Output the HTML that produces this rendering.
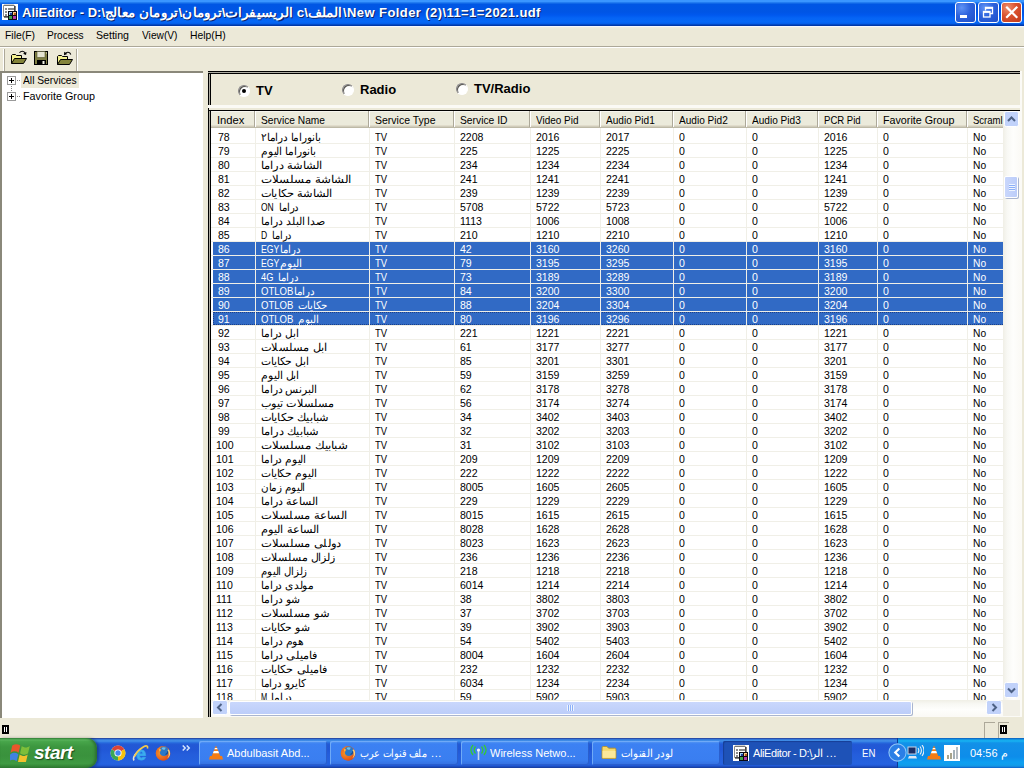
<!DOCTYPE html>
<html lang="en"><head><meta charset="utf-8"><title>AliEditor</title>
<style>
*{box-sizing:border-box;margin:0;padding:0}
html,body{width:1024px;height:768px;overflow:hidden;background:#ece9d8}
body{position:relative;font-family:"Liberation Sans",sans-serif;font-size:11px;color:#000;line-height:14px}
.abs{position:absolute}
/* title bar */
#tb{position:absolute;left:0;top:0;width:1024px;height:26px;
background:linear-gradient(to bottom,#3a96ff 0,#3a96ff 1.5px,#1670ea 3px,#0056e4 4.5px,#0055e5 12px,#0058ee 15px,#0564f5 18px,#0668f6 22px,#045ce6 24px,#0038a8 25px,#0038a8 26px)}
#tb .t{position:absolute;left:22px;top:4px;height:18px;line-height:18px;font-size:13px;font-weight:bold;color:#fff;white-space:nowrap;text-shadow:1px 1px 0 #0a246a}
.wb{position:absolute;top:2px;width:21px;height:21px;border:1px solid #fff;border-radius:3px;
background:radial-gradient(circle at 30% 25%,#5f93f5 0%,#2d62dc 45%,#1f4fc8 100%)}
.wb.x{background:radial-gradient(circle at 30% 25%,#ee9070 0%,#d9512e 45%,#c03a1c 100%)}
/* menu */
#mb{position:absolute;left:0;top:26px;width:1024px;height:20px;background:linear-gradient(to bottom,#f4f7fd 0,#f4f7fd 1px,#f0eee2 1px,#ece9d8 3px)}
#mb span{position:absolute;top:2px;line-height:14px;white-space:nowrap;transform-origin:0 50%}
#l1{position:absolute;left:0;top:46px;width:1024px;height:1px;background:#aca899}
#l2{position:absolute;left:0;top:47px;width:1024px;height:1px;background:#fff}
/* toolbar */
#tl{position:absolute;left:0;top:48px;width:1024px;height:24px;background:#ece9d8}
/* tree */
#tree{position:absolute;left:0;top:71px;width:203px;height:647px;background:#fff;border-left:2px solid #8a887a;border-top:2px solid #8a887a}
#tree .n{position:absolute;white-space:nowrap;line-height:14px;transform-origin:0 50%}
.pm{position:absolute;width:9px;height:9px;border:1px solid #9a9a9a;background:#fff}
.pm:before{content:"";position:absolute;left:1px;top:3px;width:5px;height:1px;background:#000}
.pm:after{content:"";position:absolute;left:3px;top:1px;width:1px;height:5px;background:#000}
/* right pane */
#rp{position:absolute;left:208px;top:71px;width:814px;height:37px;background:#ece9d8;border-right:2px solid #fbfaf6;border-bottom:3px solid #fbfaf5}
#rp:before,#lvb:before{content:"";position:absolute;left:0;top:0;bottom:0;width:3px;background:linear-gradient(to right,#000 0 1px,#aeaca2 1px 2px,#000 2px 3px)}
#rp:after{content:"";position:absolute;left:0;top:0;right:0;height:3px;background:linear-gradient(to bottom,#000 0 1px,#aeaca2 1px 2px,#000 2px 3px)}
.rd{position:absolute;width:12px;height:12px;border-radius:50%;background:#fff;border:1px solid;border-color:#848284 #fff #fff #848284;box-shadow:inset 1px 1px 0 #55544e}
.rd.on:after{content:"";position:absolute;left:3px;top:3px;width:4px;height:4px;border-radius:50%;background:#000}
.rl{position:absolute;font-size:13px;font-weight:bold;line-height:16px;white-space:nowrap}
/* listview */
#lvb{position:absolute;left:208px;top:108px;width:814px;height:609px;background:#fff;border-right:2px solid #fbfaf6;border-bottom:2px solid #fbfaf6}
#lvb:after{content:"";position:absolute;left:1px;top:0;right:0;height:3px;background:linear-gradient(to bottom,#ece9d8 0 2px,#000 2px 3px)}
#lv{position:absolute;left:211px;top:111px;width:792px;height:589px;background:#fff;overflow:hidden}
#hdr{position:absolute;left:0;top:0;width:792px;height:17px;background:#ebeadb;border-bottom:1px solid #bdb9a6;box-shadow:inset 0 -1px 0 #d0ccbb, inset 0 -2px 0 #e0dccb, inset 0 1px 0 #f6f5ee}
.hc{position:absolute;top:0;height:17px}
.hc span{position:absolute;left:6px;top:2px;line-height:14px;white-space:nowrap;transform-origin:0 50%}
.hc:after{content:"";position:absolute;right:0;top:0;width:1px;height:16px;background:#aca899;box-shadow:1px 0 0 #fff}
.vg{position:absolute;top:17px;width:1px;height:572px;background:#f0efe7;z-index:3}
.r{position:absolute;left:0;width:792px;height:14px;border-bottom:1px solid #f0efe7}
.r .c{position:absolute;top:0;line-height:14px;white-space:nowrap;transform-origin:0 50%;transform:scaleX(.96)}
.r.sel{color:#fff}
.r.sel:before{content:"";position:absolute;left:2px;top:0;width:790px;height:13px;background:#316ac5}
.r.sel .c{z-index:1}
/* scrollbars */
.sbt{position:absolute;background:#f6f5f0}
.sbt.v{background:linear-gradient(to right,#f0efe6 0,#f8f8f4 25%,#fefefc 60%,#fbfaf6 100%)}
.sbt.h{background:linear-gradient(to bottom,#f0efe6 0,#f8f8f4 25%,#fefefc 60%,#fbfaf6 100%)}
.sbb{position:absolute;width:17px;height:17px}
.thumb{position:absolute;background:linear-gradient(to bottom,#c9d7fc,#bccdf9);border:1px solid #fff;border-radius:2px;box-shadow:1px 1px 0 #a9b5cf}
.thumb.vt{background:linear-gradient(to right,#c9d7fc,#bccdf9)}
/* status */
#st{position:absolute;left:0;top:718px;width:1024px;height:20px;background:#ece9d8}
/* taskbar */
#tk{position:absolute;left:0;top:738px;width:1024px;height:30px;
background:linear-gradient(to bottom,#1f2f86 0,#3165c4 3%,#3682e5 6%,#4490e6 10%,#3883e5 12%,#2b71e0 15%,#2663da 18%,#235bd6 20%,#2258d5 23%,#2157d6 38%,#245ddb 54%,#2562df 86%,#245fdc 89%,#2158d4 92%,#1d4ec0 95%,#1941a5 98%)}
.tbtn{position:absolute;top:3px;height:24px;border-radius:2px;background:linear-gradient(to bottom,#5a9cf2 0,#3c81f3 12%,#3a7ef0 80%,#346fdf 100%);box-shadow:inset 1px 1px 0 #6faaf7,inset -1px -1px 0 #2a5fce;color:#fff;white-space:nowrap}
.tbtn.act{background:#1e52b7;box-shadow:inset 1px 1px 1px #173f96}
.tbtn span{position:absolute;top:5px;line-height:14px}
#tray{position:absolute;left:897px;top:0;width:127px;height:30px;border-left:1px solid #0f3a96;
background:linear-gradient(to bottom,#0c59b9 0,#139ee9 6%,#18b5f2 10%,#139beb 14%,#1290e8 19%,#0d8dea 63%,#0d9ff1 81%,#0f9eed 88%,#119be9 91%,#1392e2 94%,#137ed7 97%,#095bc9 100%)}
#start{position:absolute;left:0;top:0;width:97px;height:30px;border-radius:0 10px 10px 0;
background:linear-gradient(to bottom,#388e3c 0,#5cb860 6%,#47a54a 12%,#3c963f 30%,#3a923d 60%,#3f9a42 85%,#2f7d32 100%);box-shadow:inset -2px 0 3px #2c6e2f, 2px 0 3px rgba(0,0,0,.3)}
#start span{position:absolute;left:34px;top:4px;font-size:19px;font-weight:bold;font-style:italic;color:#fff;line-height:22px;text-shadow:1px 1px 1px #1c4a1e;letter-spacing:-0.5px}

.r.foc:after{content:"";box-sizing:border-box;position:absolute;left:2px;top:0;width:790px;height:13px;border:1px dotted #1c3f88;border-right:0;z-index:2}
.r .s{transform-origin:0 50%}

#lvb:before{bottom:-2px}

</style></head>
<body>
<div id="tb">
<svg class="abs" style="left:2px;top:4px" width="16" height="16" viewBox="0 0 16 16"><rect width="16" height="16" fill="#fff"/><path d="M1.500 1.500h11v11h-11z" fill="#fff" stroke="#8c8c8c"/><path d="M2 1.200h10" stroke="#6e6e6e" stroke-width="1"/><path d="M13 2v5M2 13h5" stroke="#000" stroke-width="1"/><rect x="3" y="4" width="2" height="2" fill="#8a8a8a"/><rect x="3" y="7" width="2" height="2" fill="#8a8a8a"/><rect x="3" y="10" width="2" height="2" fill="#8a8a8a"/><rect x="6" y="4" width="6" height="2" fill="#8a8a8a"/><rect x="6" y="7" width="9" height="9" fill="#0a0a12"/><rect x="7" y="8" width="3" height="3" fill="#1f3f9a"/><path d="M7 11v-3h3v1h-2v2z" fill="#9fd0f5"/><rect x="11" y="8" width="3" height="3" fill="#b85a14"/><path d="M11 11v-3h3v1h-2v2z" fill="#fbc98a"/><rect x="7" y="12" width="3" height="3" fill="#3fa64a"/><rect x="11" y="12" width="3" height="3" fill="#b437a8"/></svg>
<div class="t" style="left:22px">AliEditor - D:\</div><div class="t" style="left:105px;transform-origin:0 0;transform:scaleX(1.04)">الريسيفرات\ترومان\ترومان معالج c\الملف</div><div class="t" style="left:343px;letter-spacing:.42px">\New Folder (2)\11=1=2021.udf</div>
<div class="wb" style="left:955px"><i class="abs" style="left:4px;top:12px;width:7px;height:3px;background:#fff"></i></div>
<div class="wb" style="left:978px"><svg class="abs" style="left:0;top:0" width="19" height="19"><path d="M6.500 7.500V4.500h7v6h-2.500" fill="none" stroke="#fff" stroke-width="1.300"/><path d="M6.500 5h7" stroke="#fff" stroke-width="1.800"/><rect x="4.500" y="8.500" width="6.500" height="5.500" fill="none" stroke="#fff" stroke-width="1.300"/><path d="M4.500 9h6.500" stroke="#fff" stroke-width="1.800"/></svg></div>
<div class="wb x" style="left:1001px"><svg class="abs" style="left:0;top:0" width="19" height="19"><path d="M5 4.500l9.500 9.500M14.500 4.500l-9.500 9.500" stroke="#fff" stroke-width="2.200" stroke-linecap="square"/></svg></div>
</div>
<div id="mb"><span style="left:5px;transform:scaleX(.945)">File(F)</span><span style="left:47px;transform:scaleX(.92)">Process</span><span style="left:96px;transform:scaleX(.963)">Setting</span><span style="left:142px;transform:scaleX(.927)">View(V)</span><span style="left:190px;transform:scaleX(.942)">Help(H)</span></div>
<i id="l1"></i><i id="l2"></i>
<div id="tl">
<i class="abs" style="left:3px;top:1px;width:1px;height:22px;background:#fff"></i><i class="abs" style="left:4px;top:1px;width:1px;height:22px;background:#aca899"></i>
<i class="abs" style="left:76px;top:1px;width:1px;height:22px;background:#aca899"></i><i class="abs" style="left:77px;top:1px;width:1px;height:22px;background:#fff"></i>
<svg class="abs" style="left:11px;top:2px" width="16" height="16" viewBox="0 0 16 16"><path d="M0.500 13.500V5.500L1.500 4.500H4.500L5.500 5.500H10.500V8.500" fill="#f3f08f" stroke="#000"/><path d="M0.500 13.500L3.500 8.500H15.500L12.500 13.500Z" fill="#83833a" stroke="#000"/><path d="M8.500 2.800C10 0.600 13 0.600 14.300 3.200" fill="none" stroke="#000" stroke-width="1.100"/><path d="M15 5L12 3.800L15.500 2Z" fill="#000"/></svg>
<svg class="abs" style="left:34px;top:3px" width="15" height="14" viewBox="0 0 15 14"><rect x="0.500" y="0.500" width="13" height="13" fill="#7f7f43" stroke="#000"/><rect x="3" y="0.500" width="8" height="6" fill="#e6e5d2" stroke="#55552c" stroke-width=".6"/><rect x="3" y="9" width="9" height="4.500" fill="#000"/><rect x="8.500" y="10" width="2" height="3" fill="#f4f3e6"/><rect x="12" y="1.500" width="1" height="1" fill="#e6e5d2"/></svg>
<svg class="abs" style="left:57px;top:3px" width="16" height="16" viewBox="0 0 16 16"><path d="M0.500 13.500V5.500L1.500 4.500H4.500L5.500 5.500H10.500V8.500" fill="#f3f08f" stroke="#000"/><path d="M0.500 13.500L3.500 8.500H15.500L12.500 13.500Z" fill="#83833a" stroke="#000"/><path d="M13.800 3.500C12.800 0.600 9.500 0.600 8.300 2.600" fill="none" stroke="#000" stroke-width="1.100"/><path d="M7 4.300L7.200 0.800L10.300 3Z" fill="#000"/></svg>
</div>
<div id="tree">
<i class="abs" style="left:19px;top:0;width:58px;height:15px;background:#ece9d8"></i>
<i class="pm" style="left:5px;top:3px"></i><span class="n" style="left:21px;top:0;transform:scaleX(.934)">All Services</span>
<i class="pm" style="left:5px;top:19px"></i><span class="n" style="left:21px;top:16px;transform:scaleX(.98)">Favorite Group</span>
<i class="abs" style="left:9px;top:13px;width:1px;height:6px;background:repeating-linear-gradient(to bottom,#848284 0 1px,#fff 1px 2px)"></i>
<i class="abs" style="left:15px;top:7px;width:4px;height:1px;background:repeating-linear-gradient(to right,#848284 0 1px,#fff 1px 2px)"></i>
<i class="abs" style="left:15px;top:23px;width:4px;height:1px;background:repeating-linear-gradient(to right,#848284 0 1px,#fff 1px 2px)"></i>
</div>
<div id="rp">
<i class="rd on" style="left:30px;top:14px"></i><span class="rl" style="left:48px;top:12px">TV</span>
<i class="rd" style="left:134px;top:13px"></i><span class="rl" style="left:152px;top:11px">Radio</span>
<i class="rd" style="left:248px;top:12px"></i><span class="rl" style="left:266px;top:10px">TV/Radio</span>
</div>
<div id="lvb"></div>
<div id="lv">
<div id="hdr">
<div class="hc" style="left:0px;width:44px"><span style="transform:scaleX(1.02)">Index</span></div>
<div class="hc" style="left:44px;width:114px"><span style="transform:scaleX(0.926)">Service Name</span></div>
<div class="hc" style="left:158px;width:85px"><span style="transform:scaleX(0.954)">Service Type</span></div>
<div class="hc" style="left:243px;width:76px"><span style="transform:scaleX(0.936)">Service ID</span></div>
<div class="hc" style="left:319px;width:70px"><span style="transform:scaleX(0.906)">Video Pid</span></div>
<div class="hc" style="left:389px;width:73px"><span style="transform:scaleX(0.916)">Audio Pid1</span></div>
<div class="hc" style="left:462px;width:73px"><span style="transform:scaleX(0.916)">Audio Pid2</span></div>
<div class="hc" style="left:535px;width:72px"><span style="transform:scaleX(0.916)">Audio Pid3</span></div>
<div class="hc" style="left:607px;width:59px"><span style="transform:scaleX(0.87)">PCR Pid</span></div>
<div class="hc" style="left:666px;width:90px"><span style="transform:scaleX(0.974)">Favorite Group</span></div>
<div class="hc" style="left:756px;width:37px"><span style="transform:scaleX(0.865)">Scraml</span></div>
</div>
<i class="vg" style="left:44px"></i>
<i class="vg" style="left:158px"></i>
<i class="vg" style="left:243px"></i>
<i class="vg" style="left:319px"></i>
<i class="vg" style="left:389px"></i>
<i class="vg" style="left:462px"></i>
<i class="vg" style="left:535px"></i>
<i class="vg" style="left:607px"></i>
<i class="vg" style="left:666px"></i>
<i class="vg" style="left:756px"></i>
<div class="r" style="top:19px"><span class="c" style="left:6.5px">78</span><span class="c s" style="left:50px;transform:scaleX(0.951)">بانوراما دراما٢</span><span class="c s" style="left:164px;transform:scaleX(.86)">TV</span><span class="c" style="left:249px">2208</span><span class="c" style="left:325px">2016</span><span class="c" style="left:395px">2017</span><span class="c" style="left:468px">0</span><span class="c" style="left:541px">0</span><span class="c" style="left:613px">2016</span><span class="c" style="left:672px">0</span><span class="c s" style="left:762px;transform:scaleX(.93)">No</span></div>
<div class="r" style="top:33px"><span class="c" style="left:6.5px">79</span><span class="c s" style="left:50px;transform:scaleX(0.964)">بانوراما اليوم</span><span class="c s" style="left:164px;transform:scaleX(.86)">TV</span><span class="c" style="left:249px">225</span><span class="c" style="left:325px">1225</span><span class="c" style="left:395px">2225</span><span class="c" style="left:468px">0</span><span class="c" style="left:541px">0</span><span class="c" style="left:613px">1225</span><span class="c" style="left:672px">0</span><span class="c s" style="left:762px;transform:scaleX(.93)">No</span></div>
<div class="r" style="top:47px"><span class="c" style="left:6.5px">80</span><span class="c s" style="left:50px;transform:scaleX(1.041)">الشاشة دراما</span><span class="c s" style="left:164px;transform:scaleX(.86)">TV</span><span class="c" style="left:249px">234</span><span class="c" style="left:325px">1234</span><span class="c" style="left:395px">2234</span><span class="c" style="left:468px">0</span><span class="c" style="left:541px">0</span><span class="c" style="left:613px">1234</span><span class="c" style="left:672px">0</span><span class="c s" style="left:762px;transform:scaleX(.93)">No</span></div>
<div class="r" style="top:61px"><span class="c" style="left:6.5px">81</span><span class="c s" style="left:50px;transform:scaleX(1.077)">الشاشة مسلسلات</span><span class="c s" style="left:164px;transform:scaleX(.86)">TV</span><span class="c" style="left:249px">241</span><span class="c" style="left:325px">1241</span><span class="c" style="left:395px">2241</span><span class="c" style="left:468px">0</span><span class="c" style="left:541px">0</span><span class="c" style="left:613px">1241</span><span class="c" style="left:672px">0</span><span class="c s" style="left:762px;transform:scaleX(.93)">No</span></div>
<div class="r" style="top:75px"><span class="c" style="left:6.5px">82</span><span class="c s" style="left:50px;transform:scaleX(1.034)">الشاشة حكايات</span><span class="c s" style="left:164px;transform:scaleX(.86)">TV</span><span class="c" style="left:249px">239</span><span class="c" style="left:325px">1239</span><span class="c" style="left:395px">2239</span><span class="c" style="left:468px">0</span><span class="c" style="left:541px">0</span><span class="c" style="left:613px">1239</span><span class="c" style="left:672px">0</span><span class="c s" style="left:762px;transform:scaleX(.93)">No</span></div>
<div class="r" style="top:89px"><span class="c" style="left:6.5px">83</span><span class="c s" style="left:50px;transform:scaleX(0.770)">ON</span><span class="c s" style="left:68.4px;transform:scaleX(0.909)">دراما</span><span class="c s" style="left:164px;transform:scaleX(.86)">TV</span><span class="c" style="left:249px">5708</span><span class="c" style="left:325px">5722</span><span class="c" style="left:395px">5723</span><span class="c" style="left:468px">0</span><span class="c" style="left:541px">0</span><span class="c" style="left:613px">5722</span><span class="c" style="left:672px">0</span><span class="c s" style="left:762px;transform:scaleX(.93)">No</span></div>
<div class="r" style="top:103px"><span class="c" style="left:6.5px">84</span><span class="c s" style="left:50px;transform:scaleX(0.987)">صدا البلد دراما</span><span class="c s" style="left:164px;transform:scaleX(.86)">TV</span><span class="c" style="left:249px">1113</span><span class="c" style="left:325px">1006</span><span class="c" style="left:395px">1008</span><span class="c" style="left:468px">0</span><span class="c" style="left:541px">0</span><span class="c" style="left:613px">1006</span><span class="c" style="left:672px">0</span><span class="c s" style="left:762px;transform:scaleX(.93)">No</span></div>
<div class="r" style="top:117px"><span class="c" style="left:6.5px">85</span><span class="c s" style="left:50px;transform:scaleX(0.780)">D</span><span class="c s" style="left:60.5px;transform:scaleX(0.886)">دراما</span><span class="c s" style="left:164px;transform:scaleX(.86)">TV</span><span class="c" style="left:249px">210</span><span class="c" style="left:325px">1210</span><span class="c" style="left:395px">2210</span><span class="c" style="left:468px">0</span><span class="c" style="left:541px">0</span><span class="c" style="left:613px">1210</span><span class="c" style="left:672px">0</span><span class="c s" style="left:762px;transform:scaleX(.93)">No</span></div>
<div class="r sel" style="top:131px"><span class="c" style="left:6.5px">86</span><span class="c s" style="left:50px;transform:scaleX(0.792)">EGY</span><span class="c s" style="left:69.3px;transform:scaleX(0.914)">دراما</span><span class="c s" style="left:164px;transform:scaleX(.86)">TV</span><span class="c" style="left:249px">42</span><span class="c" style="left:325px">3160</span><span class="c" style="left:395px">3260</span><span class="c" style="left:468px">0</span><span class="c" style="left:541px">0</span><span class="c" style="left:613px">3160</span><span class="c" style="left:672px">0</span><span class="c s" style="left:762px;transform:scaleX(.93)">No</span></div>
<div class="r sel" style="top:145px"><span class="c" style="left:6.5px">87</span><span class="c s" style="left:50px;transform:scaleX(0.792)">EGY</span><span class="c s" style="left:69.0px;transform:scaleX(0.977)">اليوم</span><span class="c s" style="left:164px;transform:scaleX(.86)">TV</span><span class="c" style="left:249px">79</span><span class="c" style="left:325px">3195</span><span class="c" style="left:395px">3295</span><span class="c" style="left:468px">0</span><span class="c" style="left:541px">0</span><span class="c" style="left:613px">3195</span><span class="c" style="left:672px">0</span><span class="c s" style="left:762px;transform:scaleX(.93)">No</span></div>
<div class="r sel" style="top:159px"><span class="c" style="left:6.5px">88</span><span class="c s" style="left:50px;transform:scaleX(0.844)">4G</span><span class="c s" style="left:66.5px;transform:scaleX(0.918)">دراما</span><span class="c s" style="left:164px;transform:scaleX(.86)">TV</span><span class="c" style="left:249px">73</span><span class="c" style="left:325px">3189</span><span class="c" style="left:395px">3289</span><span class="c" style="left:468px">0</span><span class="c" style="left:541px">0</span><span class="c" style="left:613px">3189</span><span class="c" style="left:672px">0</span><span class="c s" style="left:762px;transform:scaleX(.93)">No</span></div>
<div class="r sel" style="top:173px"><span class="c" style="left:6.5px">89</span><span class="c s" style="left:50px;transform:scaleX(0.869)">OTLOB</span><span class="c s" style="left:83.0px;transform:scaleX(0.936)">دراما</span><span class="c s" style="left:164px;transform:scaleX(.86)">TV</span><span class="c" style="left:249px">84</span><span class="c" style="left:325px">3200</span><span class="c" style="left:395px">3300</span><span class="c" style="left:468px">0</span><span class="c" style="left:541px">0</span><span class="c" style="left:613px">3200</span><span class="c" style="left:672px">0</span><span class="c s" style="left:762px;transform:scaleX(.93)">No</span></div>
<div class="r sel" style="top:187px"><span class="c" style="left:6.5px">90</span><span class="c s" style="left:50px;transform:scaleX(0.869)">OTLOB</span><span class="c s" style="left:86.7px;transform:scaleX(0.922)">حكايات</span><span class="c s" style="left:164px;transform:scaleX(.86)">TV</span><span class="c" style="left:249px">88</span><span class="c" style="left:325px">3204</span><span class="c" style="left:395px">3304</span><span class="c" style="left:468px">0</span><span class="c" style="left:541px">0</span><span class="c" style="left:613px">3204</span><span class="c" style="left:672px">0</span><span class="c s" style="left:762px;transform:scaleX(.93)">No</span></div>
<div class="r sel foc" style="top:201px"><span class="c" style="left:6.5px">91</span><span class="c s" style="left:50px;transform:scaleX(0.869)">OTLOB</span><span class="c s" style="left:86.7px;transform:scaleX(0.936)">اليوم</span><span class="c s" style="left:164px;transform:scaleX(.86)">TV</span><span class="c" style="left:249px">80</span><span class="c" style="left:325px">3196</span><span class="c" style="left:395px">3296</span><span class="c" style="left:468px">0</span><span class="c" style="left:541px">0</span><span class="c" style="left:613px">3196</span><span class="c" style="left:672px">0</span><span class="c s" style="left:762px;transform:scaleX(.93)">No</span></div>
<div class="r" style="top:215px"><span class="c" style="left:6.5px">92</span><span class="c s" style="left:50px;transform:scaleX(0.960)">ابل دراما</span><span class="c s" style="left:164px;transform:scaleX(.86)">TV</span><span class="c" style="left:249px">221</span><span class="c" style="left:325px">1221</span><span class="c" style="left:395px">2221</span><span class="c" style="left:468px">0</span><span class="c" style="left:541px">0</span><span class="c" style="left:613px">1221</span><span class="c" style="left:672px">0</span><span class="c s" style="left:762px;transform:scaleX(.93)">No</span></div>
<div class="r" style="top:229px"><span class="c" style="left:6.5px">93</span><span class="c s" style="left:50px;transform:scaleX(1.033)">ابل مسلسلات</span><span class="c s" style="left:164px;transform:scaleX(.86)">TV</span><span class="c" style="left:249px">61</span><span class="c" style="left:325px">3177</span><span class="c" style="left:395px">3277</span><span class="c" style="left:468px">0</span><span class="c" style="left:541px">0</span><span class="c" style="left:613px">3177</span><span class="c" style="left:672px">0</span><span class="c s" style="left:762px;transform:scaleX(.93)">No</span></div>
<div class="r" style="top:243px"><span class="c" style="left:6.5px">94</span><span class="c s" style="left:50px;transform:scaleX(0.974)">ابل حكايات</span><span class="c s" style="left:164px;transform:scaleX(.86)">TV</span><span class="c" style="left:249px">85</span><span class="c" style="left:325px">3201</span><span class="c" style="left:395px">3301</span><span class="c" style="left:468px">0</span><span class="c" style="left:541px">0</span><span class="c" style="left:613px">3201</span><span class="c" style="left:672px">0</span><span class="c s" style="left:762px;transform:scaleX(.93)">No</span></div>
<div class="r" style="top:257px"><span class="c" style="left:6.5px">95</span><span class="c s" style="left:50px;transform:scaleX(0.983)">ابل اليوم</span><span class="c s" style="left:164px;transform:scaleX(.86)">TV</span><span class="c" style="left:249px">59</span><span class="c" style="left:325px">3159</span><span class="c" style="left:395px">3259</span><span class="c" style="left:468px">0</span><span class="c" style="left:541px">0</span><span class="c" style="left:613px">3159</span><span class="c" style="left:672px">0</span><span class="c s" style="left:762px;transform:scaleX(.93)">No</span></div>
<div class="r" style="top:271px"><span class="c" style="left:6.5px">96</span><span class="c s" style="left:50px;transform:scaleX(0.973)">البرنس دراما</span><span class="c s" style="left:164px;transform:scaleX(.86)">TV</span><span class="c" style="left:249px">62</span><span class="c" style="left:325px">3178</span><span class="c" style="left:395px">3278</span><span class="c" style="left:468px">0</span><span class="c" style="left:541px">0</span><span class="c" style="left:613px">3178</span><span class="c" style="left:672px">0</span><span class="c s" style="left:762px;transform:scaleX(.93)">No</span></div>
<div class="r" style="top:285px"><span class="c" style="left:6.5px">97</span><span class="c s" style="left:50px;transform:scaleX(1.017)">مسلسلات تيوب</span><span class="c s" style="left:164px;transform:scaleX(.86)">TV</span><span class="c" style="left:249px">56</span><span class="c" style="left:325px">3174</span><span class="c" style="left:395px">3274</span><span class="c" style="left:468px">0</span><span class="c" style="left:541px">0</span><span class="c" style="left:613px">3174</span><span class="c" style="left:672px">0</span><span class="c s" style="left:762px;transform:scaleX(.93)">No</span></div>
<div class="r" style="top:299px"><span class="c" style="left:6.5px">98</span><span class="c s" style="left:50px;transform:scaleX(1.031)">شبابيك حكايات</span><span class="c s" style="left:164px;transform:scaleX(.86)">TV</span><span class="c" style="left:249px">34</span><span class="c" style="left:325px">3402</span><span class="c" style="left:395px">3403</span><span class="c" style="left:468px">0</span><span class="c" style="left:541px">0</span><span class="c" style="left:613px">3402</span><span class="c" style="left:672px">0</span><span class="c s" style="left:762px;transform:scaleX(.93)">No</span></div>
<div class="r" style="top:313px"><span class="c" style="left:6.5px">99</span><span class="c s" style="left:50px;transform:scaleX(1.041)">شبابيك دراما</span><span class="c s" style="left:164px;transform:scaleX(.86)">TV</span><span class="c" style="left:249px">32</span><span class="c" style="left:325px">3202</span><span class="c" style="left:395px">3203</span><span class="c" style="left:468px">0</span><span class="c" style="left:541px">0</span><span class="c" style="left:613px">3202</span><span class="c" style="left:672px">0</span><span class="c s" style="left:762px;transform:scaleX(.93)">No</span></div>
<div class="r" style="top:327px"><span class="c" style="left:4.5px">100</span><span class="c s" style="left:50px;transform:scaleX(1.077)">شبابيك مسلسلات</span><span class="c s" style="left:164px;transform:scaleX(.86)">TV</span><span class="c" style="left:249px">31</span><span class="c" style="left:325px">3102</span><span class="c" style="left:395px">3103</span><span class="c" style="left:468px">0</span><span class="c" style="left:541px">0</span><span class="c" style="left:613px">3102</span><span class="c" style="left:672px">0</span><span class="c s" style="left:762px;transform:scaleX(.93)">No</span></div>
<div class="r" style="top:341px"><span class="c" style="left:4.5px">101</span><span class="c s" style="left:50px;transform:scaleX(0.960)">اليوم دراما</span><span class="c s" style="left:164px;transform:scaleX(.86)">TV</span><span class="c" style="left:249px">209</span><span class="c" style="left:325px">1209</span><span class="c" style="left:395px">2209</span><span class="c" style="left:468px">0</span><span class="c" style="left:541px">0</span><span class="c" style="left:613px">1209</span><span class="c" style="left:672px">0</span><span class="c s" style="left:762px;transform:scaleX(.93)">No</span></div>
<div class="r" style="top:355px"><span class="c" style="left:4.5px">102</span><span class="c s" style="left:50px;transform:scaleX(0.973)">اليوم حكايات</span><span class="c s" style="left:164px;transform:scaleX(.86)">TV</span><span class="c" style="left:249px">222</span><span class="c" style="left:325px">1222</span><span class="c" style="left:395px">2222</span><span class="c" style="left:468px">0</span><span class="c" style="left:541px">0</span><span class="c" style="left:613px">1222</span><span class="c" style="left:672px">0</span><span class="c s" style="left:762px;transform:scaleX(.93)">No</span></div>
<div class="r" style="top:369px"><span class="c" style="left:4.5px">103</span><span class="c s" style="left:50px;transform:scaleX(0.939)">اليوم زمان</span><span class="c s" style="left:164px;transform:scaleX(.86)">TV</span><span class="c" style="left:249px">8005</span><span class="c" style="left:325px">1605</span><span class="c" style="left:395px">2605</span><span class="c" style="left:468px">0</span><span class="c" style="left:541px">0</span><span class="c" style="left:613px">1605</span><span class="c" style="left:672px">0</span><span class="c s" style="left:762px;transform:scaleX(.93)">No</span></div>
<div class="r" style="top:383px"><span class="c" style="left:4.5px">104</span><span class="c s" style="left:50px;transform:scaleX(1.004)">الساعة دراما</span><span class="c s" style="left:164px;transform:scaleX(.86)">TV</span><span class="c" style="left:249px">229</span><span class="c" style="left:325px">1229</span><span class="c" style="left:395px">2229</span><span class="c" style="left:468px">0</span><span class="c" style="left:541px">0</span><span class="c" style="left:613px">1229</span><span class="c" style="left:672px">0</span><span class="c s" style="left:762px;transform:scaleX(.93)">No</span></div>
<div class="r" style="top:397px"><span class="c" style="left:4.5px">105</span><span class="c s" style="left:50px;transform:scaleX(1.050)">الساعة مسلسلات</span><span class="c s" style="left:164px;transform:scaleX(.86)">TV</span><span class="c" style="left:249px">8015</span><span class="c" style="left:325px">1615</span><span class="c" style="left:395px">2615</span><span class="c" style="left:468px">0</span><span class="c" style="left:541px">0</span><span class="c" style="left:613px">1615</span><span class="c" style="left:672px">0</span><span class="c s" style="left:762px;transform:scaleX(.93)">No</span></div>
<div class="r" style="top:411px"><span class="c" style="left:4.5px">106</span><span class="c s" style="left:50px;transform:scaleX(1.025)">الساعة اليوم</span><span class="c s" style="left:164px;transform:scaleX(.86)">TV</span><span class="c" style="left:249px">8028</span><span class="c" style="left:325px">1628</span><span class="c" style="left:395px">2628</span><span class="c" style="left:468px">0</span><span class="c" style="left:541px">0</span><span class="c" style="left:613px">1628</span><span class="c" style="left:672px">0</span><span class="c s" style="left:762px;transform:scaleX(.93)">No</span></div>
<div class="r" style="top:425px"><span class="c" style="left:4.5px">107</span><span class="c s" style="left:50px;transform:scaleX(1.056)">دوللى مسلسلات</span><span class="c s" style="left:164px;transform:scaleX(.86)">TV</span><span class="c" style="left:249px">8023</span><span class="c" style="left:325px">1623</span><span class="c" style="left:395px">2623</span><span class="c" style="left:468px">0</span><span class="c" style="left:541px">0</span><span class="c" style="left:613px">1623</span><span class="c" style="left:672px">0</span><span class="c s" style="left:762px;transform:scaleX(.93)">No</span></div>
<div class="r" style="top:439px"><span class="c" style="left:4.5px">108</span><span class="c s" style="left:50px;transform:scaleX(0.989)">زلزال مسلسلات</span><span class="c s" style="left:164px;transform:scaleX(.86)">TV</span><span class="c" style="left:249px">236</span><span class="c" style="left:325px">1236</span><span class="c" style="left:395px">2236</span><span class="c" style="left:468px">0</span><span class="c" style="left:541px">0</span><span class="c" style="left:613px">1236</span><span class="c" style="left:672px">0</span><span class="c s" style="left:762px;transform:scaleX(.93)">No</span></div>
<div class="r" style="top:453px"><span class="c" style="left:4.5px">109</span><span class="c s" style="left:50px;transform:scaleX(0.919)">زلزال اليوم</span><span class="c s" style="left:164px;transform:scaleX(.86)">TV</span><span class="c" style="left:249px">218</span><span class="c" style="left:325px">1218</span><span class="c" style="left:395px">2218</span><span class="c" style="left:468px">0</span><span class="c" style="left:541px">0</span><span class="c" style="left:613px">1218</span><span class="c" style="left:672px">0</span><span class="c s" style="left:762px;transform:scaleX(.93)">No</span></div>
<div class="r" style="top:467px"><span class="c" style="left:4.5px">110</span><span class="c s" style="left:50px;transform:scaleX(0.963)">مولدى دراما</span><span class="c s" style="left:164px;transform:scaleX(.86)">TV</span><span class="c" style="left:249px">6014</span><span class="c" style="left:325px">1214</span><span class="c" style="left:395px">2214</span><span class="c" style="left:468px">0</span><span class="c" style="left:541px">0</span><span class="c" style="left:613px">1214</span><span class="c" style="left:672px">0</span><span class="c s" style="left:762px;transform:scaleX(.93)">No</span></div>
<div class="r" style="top:481px"><span class="c" style="left:4.5px">111</span><span class="c s" style="left:50px;transform:scaleX(0.978)">شو دراما</span><span class="c s" style="left:164px;transform:scaleX(.86)">TV</span><span class="c" style="left:249px">38</span><span class="c" style="left:325px">3802</span><span class="c" style="left:395px">3803</span><span class="c" style="left:468px">0</span><span class="c" style="left:541px">0</span><span class="c" style="left:613px">3802</span><span class="c" style="left:672px">0</span><span class="c s" style="left:762px;transform:scaleX(.93)">No</span></div>
<div class="r" style="top:495px"><span class="c" style="left:4.5px">112</span><span class="c s" style="left:50px;transform:scaleX(1.050)">شو مسلسلات</span><span class="c s" style="left:164px;transform:scaleX(.86)">TV</span><span class="c" style="left:249px">37</span><span class="c" style="left:325px">3702</span><span class="c" style="left:395px">3703</span><span class="c" style="left:468px">0</span><span class="c" style="left:541px">0</span><span class="c" style="left:613px">3702</span><span class="c" style="left:672px">0</span><span class="c s" style="left:762px;transform:scaleX(.93)">No</span></div>
<div class="r" style="top:509px"><span class="c" style="left:4.5px">113</span><span class="c s" style="left:50px;transform:scaleX(0.979)">شو حكايات</span><span class="c s" style="left:164px;transform:scaleX(.86)">TV</span><span class="c" style="left:249px">39</span><span class="c" style="left:325px">3902</span><span class="c" style="left:395px">3903</span><span class="c" style="left:468px">0</span><span class="c" style="left:541px">0</span><span class="c" style="left:613px">3902</span><span class="c" style="left:672px">0</span><span class="c s" style="left:762px;transform:scaleX(.93)">No</span></div>
<div class="r" style="top:523px"><span class="c" style="left:4.5px">114</span><span class="c s" style="left:50px;transform:scaleX(0.980)">هوم دراما</span><span class="c s" style="left:164px;transform:scaleX(.86)">TV</span><span class="c" style="left:249px">54</span><span class="c" style="left:325px">5402</span><span class="c" style="left:395px">5403</span><span class="c" style="left:468px">0</span><span class="c" style="left:541px">0</span><span class="c" style="left:613px">5402</span><span class="c" style="left:672px">0</span><span class="c s" style="left:762px;transform:scaleX(.93)">No</span></div>
<div class="r" style="top:537px"><span class="c" style="left:4.5px">115</span><span class="c s" style="left:50px;transform:scaleX(1.017)">فاميلى دراما</span><span class="c s" style="left:164px;transform:scaleX(.86)">TV</span><span class="c" style="left:249px">8004</span><span class="c" style="left:325px">1604</span><span class="c" style="left:395px">2604</span><span class="c" style="left:468px">0</span><span class="c" style="left:541px">0</span><span class="c" style="left:613px">1604</span><span class="c" style="left:672px">0</span><span class="c s" style="left:762px;transform:scaleX(.93)">No</span></div>
<div class="r" style="top:551px"><span class="c" style="left:4.5px">116</span><span class="c s" style="left:50px;transform:scaleX(1.017)">فاميلى حكايات</span><span class="c s" style="left:164px;transform:scaleX(.86)">TV</span><span class="c" style="left:249px">232</span><span class="c" style="left:325px">1232</span><span class="c" style="left:395px">2232</span><span class="c" style="left:468px">0</span><span class="c" style="left:541px">0</span><span class="c" style="left:613px">1232</span><span class="c" style="left:672px">0</span><span class="c s" style="left:762px;transform:scaleX(.93)">No</span></div>
<div class="r" style="top:565px"><span class="c" style="left:4.5px">117</span><span class="c s" style="left:50px;transform:scaleX(0.943)">كايرو دراما</span><span class="c s" style="left:164px;transform:scaleX(.86)">TV</span><span class="c" style="left:249px">6034</span><span class="c" style="left:325px">1234</span><span class="c" style="left:395px">2234</span><span class="c" style="left:468px">0</span><span class="c" style="left:541px">0</span><span class="c" style="left:613px">1234</span><span class="c" style="left:672px">0</span><span class="c s" style="left:762px;transform:scaleX(.93)">No</span></div>
<div class="r" style="top:579px"><span class="c" style="left:4.5px">118</span><span class="c s" style="left:50px;transform:scaleX(0.676)">M</span><span class="c s" style="left:60.4px;transform:scaleX(0.959)">دراما</span><span class="c s" style="left:164px;transform:scaleX(.86)">TV</span><span class="c" style="left:249px">59</span><span class="c" style="left:325px">5902</span><span class="c" style="left:395px">5903</span><span class="c" style="left:468px">0</span><span class="c" style="left:541px">0</span><span class="c" style="left:613px">5902</span><span class="c" style="left:672px">0</span><span class="c s" style="left:762px;transform:scaleX(.93)">No</span></div>
</div>
<!-- vertical scrollbar -->
<div class="sbt v" style="left:1003px;top:111px;width:17px;height:589px"></div>
<div class="sbb" style="left:1003px;top:111px"><svg width="17" height="17"><rect x="1.5" y="0.5" width="14" height="15" rx="2" fill="#c3d3fc" stroke="#fff"/><rect x="2" y="1" width="13" height="14" rx="2" fill="#c1d2fa"/><path d="M5 10l3.500-3.500l3.500 3.500" fill="none" stroke="#4d6185" stroke-width="2"/></svg></div>
<div class="thumb vt" style="left:1004px;top:176px;width:14px;height:22px"><i class="abs" style="left:4px;top:7px;width:6px;height:7px;background:repeating-linear-gradient(to bottom,#eef4fe 0 1px,#8cb0f8 1px 2px)"></i></div>
<div class="sbb" style="left:1003px;top:682px"><svg width="17" height="17"><rect x="1.5" y="0.5" width="14" height="15" rx="2" fill="#c3d3fc" stroke="#fff"/><rect x="2" y="1" width="13" height="14" rx="2" fill="#c1d2fa"/><path d="M5 6.500l3.500 3.500l3.500-3.500" fill="none" stroke="#4d6185" stroke-width="2"/></svg></div>
<!-- horizontal scrollbar -->
<div class="sbt h" style="left:211px;top:700px;width:792px;height:16px"></div>
<div class="abs" style="left:1003px;top:700px;width:17px;height:16px;background:#f1efe6"></div>
<div class="sbb" style="left:211px;top:700px"><svg width="17" height="17"><rect x="1.5" y="0.5" width="15" height="14" rx="2" fill="#c3d3fc" stroke="#fff"/><rect x="2" y="1" width="14" height="13" rx="2" fill="#c1d2fa"/><path d="M10.500 4l-3.500 3.500l3.500 3.500" fill="none" stroke="#4d6185" stroke-width="2"/></svg></div>
<div class="thumb" style="left:229px;top:701px;width:683px;height:14px"><i class="abs" style="left:337px;top:3px;width:7px;height:6px;background:repeating-linear-gradient(to right,#eef4fe 0 1px,#8cb0f8 1px 2px)"></i></div>
<div class="sbb" style="left:986px;top:700px"><svg width="17" height="17"><rect x="0.500" y="0.5" width="15" height="14" rx="2" fill="#c3d3fc" stroke="#fff"/><rect x="1" y="1" width="14" height="13" rx="2" fill="#c1d2fa"/><path d="M6.500 4l3.500 3.500l-3.500 3.500" fill="none" stroke="#4d6185" stroke-width="2"/></svg></div>
<!-- status bar -->
<div id="st">
<i class="abs" style="left:2px;top:7px;width:7px;height:9px;background:#000"></i><i class="abs" style="left:4px;top:9px;width:1px;height:5px;background:#fff"></i><i class="abs" style="left:6px;top:9px;width:1px;height:5px;background:#fff"></i>
<i class="abs" style="left:984px;top:4px;width:11px;height:16px;border-left:1px solid #aca899;border-top:1px solid #aca899"></i>
<i class="abs" style="left:998px;top:4px;width:11px;height:16px;border-left:1px solid #aca899;border-top:1px solid #aca899"></i>
<i class="abs" style="left:1000px;top:7px;width:7px;height:9px;background:#000"></i><i class="abs" style="left:1002px;top:9px;width:1px;height:5px;background:#fff"></i><i class="abs" style="left:1004px;top:9px;width:1px;height:5px;background:#fff"></i>
</div>
<!-- taskbar -->
<div id="tk">
<div id="start"><svg class="abs" style="left:10px;top:5px" width="20" height="19" viewBox="-0.5 1.5 17.5 14.5" preserveAspectRatio="none"><path d="M1.500 3.500c2.500-1.500 4.500-1.500 7 0l-1.500 5.500c-2.500-1.500-4.500-1.500-7 0z" fill="#e8572b"/><path d="M9.800 3.800c2.500 1.500 4.500 1.500 7 0l-1.500 5.500c-2.500 1.500-4.500 1.500-7 0z" fill="#7dbe3a"/><path d="M-0.200 10c2.500-1.500 4.500-1.500 7 0l-1.500 5.500c-2.500-1.500-4.500-1.500-7 0z" fill="#3f82e0"/><path d="M8 10.300c2.500 1.500 4.500 1.500 7 0l-1.500 5.500c-2.500 1.500-4.500 1.500-7 0z" fill="#f2c12c"/></svg><span>start</span></div>
<!-- quick launch -->
<svg class="abs" style="left:110px;top:7px" width="16" height="16" viewBox="0 0 16 16"><circle cx="8" cy="8" r="7.500" fill="#e0e0e0"/><path d="M8 8L1.600 4.200A7.500 7.500 0 0 1 14.400 4.200z" fill="#db4437"/><path d="M8 8L14.400 4.200A7.500 7.500 0 0 1 8 15.500z" fill="#f4c20d"/><path d="M8 8L8 15.500A7.500 7.500 0 0 1 1.600 4.200z" fill="#3aa757"/><circle cx="8" cy="8" r="3.600" fill="#fff"/><circle cx="8" cy="8" r="2.700" fill="#4285f4"/></svg>
<svg class="abs" style="left:132px;top:6px" width="18" height="18" viewBox="0 0 18 18"><path d="M2.200 16.300c-2.200-1.800 1.500-8 6.500-11.500" fill="none" stroke="#e8e4d0" stroke-width="1.600"/><text x="4.300" y="15.700" font-family="Liberation Sans,sans-serif" font-weight="bold" font-size="17.500" fill="#3fb0f2" stroke="#36a4ec" stroke-width=".9">e</text><path d="M2.600 12.500c1.500-3.500 5-7.500 9-9.800c2.800-1.500 4.700-.8 3.800 1.800" fill="none" stroke="#f3c94a" stroke-width="1.700"/></svg>
<svg class="abs" style="left:155px;top:7px" width="16" height="16" viewBox="0 0 16 16"><defs><radialGradient id="fg1" cx=".35" cy=".4" r=".8"><stop offset="0" stop-color="#f59a2a"/><stop offset=".6" stop-color="#e8601c"/><stop offset="1" stop-color="#c8401a"/></radialGradient></defs><circle cx="8" cy="8.300" r="7.200" fill="url(#fg1)"/><circle cx="9" cy="6.300" r="4.800" fill="#2a78c8"/><path d="M6.500 3c1.200-.9 3.300-.9 4.600 0c-.9.300-1.300.9-1.200 1.700c-1.200.4-2.300-.1-2.700-.8z" fill="#6fc0ea"/><path d="M10.500 9.500c1.500-.5 2.300-1.700 2.300-3.300" fill="none" stroke="#1a4a90" stroke-width="1.200"/><path d="M0.900 8c0 4.200 3.200 7.500 7.200 7.500c3.900 0 7-3 7.200-6.800c-.9 2.400-2.900 3.800-5.300 3.800c-2.900 0-5-2-5-4.600c0-1.200.5-2.300 1.300-3c-1.200.1-2.100-.3-2.700-1.200c-1.700 1-2.700 2.600-2.700 4.300z" fill="url(#fg1)"/><path d="M13.800 4.500c1.200 1.500 1.600 3.600 1.100 5.500c-.5 1.500-1.400 2.600-2.600 3.400c1-1.300 1.500-2.700 1.400-4.300c0-1.700-.5-3-1.300-4z" fill="#f9d27a"/><path d="M3.800 3.400c.7.700 1.700 1 2.800.8c-.8.600-1.400 1.500-1.600 2.600c-.9-.8-1.300-2-1.200-3.400z" fill="#f8b84a"/></svg>
<svg class="abs" style="left:182px;top:7px" width="9" height="6" viewBox="0 0 9 6"><path d="M0.700 0.500L3.200 3L0.700 5.500M4.700 0.500L7.200 3L4.700 5.500" fill="none" stroke="#d4e4fd" stroke-width="1.500"/></svg>
<div class="tbtn" style="left:199px;width:128px"><svg class="abs" style="left:10px;top:4px" width="14" height="15" viewBox="0 0 14 15"><path d="M7 0.500l4.500 11h-9z" fill="#f57c13"/><path d="M4.800 6h4.400l.9 2.300h-6.200zM5.900 3h2.200l.5 1.300h-3.200z" fill="#fff"/><path d="M1 11h12l1 3.500h-14z" fill="#f57c13"/></svg><span style="left:28px">Abdulbasit Abd...</span></div>
<div class="tbtn" style="left:330px;width:128px"><svg class="abs" style="left:10px;top:4px" width="16" height="16" viewBox="0 0 16 16"><defs><radialGradient id="fg2" cx=".35" cy=".4" r=".8"><stop offset="0" stop-color="#f59a2a"/><stop offset=".6" stop-color="#e8601c"/><stop offset="1" stop-color="#c8401a"/></radialGradient></defs><circle cx="8" cy="8.300" r="7.200" fill="url(#fg2)"/><circle cx="9" cy="6.300" r="4.800" fill="#2a78c8"/><path d="M6.500 3c1.200-.9 3.300-.9 4.600 0c-.9.300-1.300.9-1.200 1.700c-1.200.4-2.300-.1-2.700-.8z" fill="#6fc0ea"/><path d="M10.500 9.500c1.500-.5 2.300-1.700 2.300-3.300" fill="none" stroke="#1a4a90" stroke-width="1.200"/><path d="M0.900 8c0 4.200 3.200 7.500 7.200 7.500c3.900 0 7-3 7.200-6.800c-.9 2.400-2.900 3.800-5.300 3.800c-2.900 0-5-2-5-4.600c0-1.200.5-2.300 1.300-3c-1.200.1-2.100-.3-2.700-1.200c-1.700 1-2.700 2.600-2.700 4.300z" fill="url(#fg2)"/><path d="M13.800 4.500c1.200 1.500 1.600 3.600 1.100 5.500c-.5 1.500-1.400 2.600-2.600 3.400c1-1.300 1.500-2.700 1.400-4.300c0-1.700-.5-3-1.300-4z" fill="#f9d27a"/><path d="M3.800 3.400c.7.700 1.700 1 2.800.8c-.8.600-1.400 1.500-1.600 2.600c-.9-.8-1.300-2-1.200-3.400z" fill="#f8b84a"/></svg><span style="left:30px;transform-origin:0 50%;transform:scaleX(.869)">ملف قنوات عرب</span><span style="left:101px;letter-spacing:.6px">...</span></div>
<div class="tbtn" style="left:461px;width:128px"><svg class="abs" style="left:9px;top:3px" width="17" height="17" viewBox="0 0 17 17"><path d="M8.500 7v9" stroke="#c9d6e8" stroke-width="1.600"/><circle cx="8.500" cy="6" r="1.600" fill="#e8f0fb"/><path d="M5.500 2.500c-1.500 2-1.500 5 0 7M11.500 2.500c1.500 2 1.500 5 0 7M3 1c-2.500 3-2.500 7 0 10M14 1c2.500 3 2.500 7 0 10" fill="none" stroke="#37c837" stroke-width="1.300"/></svg><span style="left:29px">Wireless Netwo...</span></div>
<div class="tbtn" style="left:592px;width:128px"><svg class="abs" style="left:9px;top:5px" width="16" height="13" viewBox="0 0 17 15"><path d="M0.500 13.500v-11.500c0-.8.500-1.500 1.500-1.500h4l2 2h7c1 0 1.500.5 1.500 1.500v9.500c0 .8-.5 1.300-1.300 1.300h-13.400c-.8 0-1.300-.5-1.300-1.300z" fill="#f6d86a" stroke="#b98f1c"/><path d="M1 5.500h15v8h-15z" fill="#fbe89a"/></svg><span style="left:29px;transform-origin:0 50%;transform:scaleX(.93)">لودر القنوات</span></div>
<div class="tbtn act" style="left:723px;width:129px"><svg class="abs" style="left:10px;top:4px" width="16" height="16" viewBox="0 0 16 16"><rect width="16" height="16" fill="#fff"/><path d="M1.500 1.500h11v11h-11z" fill="#fff" stroke="#8c8c8c"/><path d="M2 1.200h10" stroke="#6e6e6e" stroke-width="1"/><path d="M13 2v5M2 13h5" stroke="#000" stroke-width="1"/><rect x="3" y="4" width="2" height="2" fill="#8a8a8a"/><rect x="3" y="7" width="2" height="2" fill="#8a8a8a"/><rect x="3" y="10" width="2" height="2" fill="#8a8a8a"/><rect x="6" y="4" width="6" height="2" fill="#8a8a8a"/><rect x="6" y="7" width="9" height="9" fill="#0a0a12"/><rect x="7" y="8" width="3" height="3" fill="#1f3f9a"/><path d="M7 11v-3h3v1h-2v2z" fill="#9fd0f5"/><rect x="11" y="8" width="3" height="3" fill="#b85a14"/><path d="M11 11v-3h3v1h-2v2z" fill="#fbc98a"/><rect x="7" y="12" width="3" height="3" fill="#3fa64a"/><rect x="11" y="12" width="3" height="3" fill="#b437a8"/></svg><span style="left:30px;letter-spacing:-.39px">AliEditor - D:\</span><span style="left:88px">الر</span><span style="left:103px;letter-spacing:.6px">...</span></div>
<span class="abs" style="left:862px;top:8px;color:#fff;line-height:14px;transform-origin:0 50%;transform:scaleX(.87)">EN</span>
<div id="tray">
<svg class="abs" style="left:-10px;top:5px" width="19" height="19" viewBox="0 0 21 21"><circle cx="10.500" cy="10.500" r="9.500" fill="#2b7fe6" stroke="#8cc4f7" stroke-width="1.200"/><path d="M12.500 6l-4.500 4.500l4.500 4.500" fill="none" stroke="#fff" stroke-width="2.400"/></svg>
<svg class="abs" style="left:9px;top:7px" width="17" height="15" viewBox="0 0 17 15"><rect x="1" y="2" width="8" height="7" fill="#1b2f66" stroke="#c8d4e8"/><path d="M2 11h7l1 2.500h-9z" fill="#dfe6f2"/><path d="M11 3c1 1.500 1 3.500 0 5M13 1.500c1.800 2.500 1.800 5.500 0 8M15 0c2.500 3.500 2.500 7.500 0 11" fill="none" stroke="#e8eef8" stroke-width="1.100"/></svg>
<svg class="abs" style="left:29px;top:7px" width="14" height="15" viewBox="0 0 14 15"><path d="M7 0.500l4.500 11h-9z" fill="#f57c13"/><path d="M4.800 6h4.400l.9 2.300h-6.200zM5.900 3h2.200l.5 1.300h-3.200z" fill="#fff"/><path d="M1 11h12l1 3.500h-14z" fill="#f57c13"/></svg>
<svg class="abs" style="left:46px;top:7px" width="16" height="16" viewBox="0 0 16 16"><rect width="16" height="16" fill="#fff"/><rect x="3" y="10" width="2" height="4" fill="#a8a48c"/><rect x="6" y="8" width="2" height="6" fill="#a8a48c"/><rect x="9" y="5" width="2" height="9" fill="#a3b0b8"/><rect x="12" y="2" width="2" height="12" fill="#b4bcc4"/></svg>
<span class="abs" style="left:72px;top:8px;color:#fff;line-height:14px;white-space:nowrap" dir="ltr">04:56 م</span>
</div>
</div>

</body></html>
